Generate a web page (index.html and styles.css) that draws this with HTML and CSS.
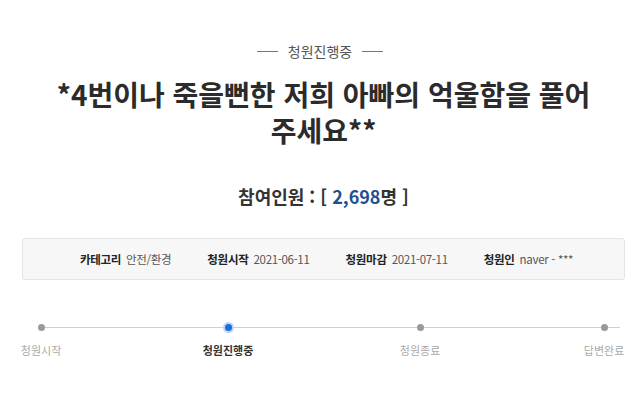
FILE: index.html
```html
<!DOCTYPE html>
<html lang="ko">
<head>
<meta charset="utf-8">
<link rel="stylesheet" href="styles.css">
</head>
<body>
<div class="page">
  <div class="status"><span class="dash"></span><span class="status-text">청원진행중</span><span class="dash"></span></div>
  <h1 class="title">*4번이나 죽을뻔한 저희 아빠의 억울함을 풀어<br>주세요**</h1>
  <div class="count">참여인원 : [ <span class="num">2,698</span>명 ]</div>
  <div class="info">
    <div class="item"><span class="k">카테고리</span><span class="v">안전/환경</span></div>
    <div class="item"><span class="k">청원시작</span><span class="v">2021-06-11</span></div>
    <div class="item"><span class="k">청원마감</span><span class="v">2021-07-11</span></div>
    <div class="item"><span class="k">청원인</span><span class="v">naver - ***</span></div>
  </div>
  <div class="progress">
    <div class="track"></div>
    <div class="step s1"><span class="dot"></span><span class="label">청원시작</span></div>
    <div class="step s2 active"><span class="dot"></span><span class="label">청원진행중</span></div>
    <div class="step s3"><span class="dot"></span><span class="label">청원종료</span></div>
    <div class="step s4"><span class="dot"></span><span class="label">답변완료</span></div>
  </div>
</div>
</body>
</html>
```
FILE: styles.css
```css
* { box-sizing: border-box; }
html, body { margin: 0; padding: 0; background: #fff; }
body { font-family: "Noto Sans CJK KR", "Noto Sans", sans-serif; color: #333; }
.page { width: 640px; padding: 0 15px 0 22px; }
.status { display: flex; align-items: center; justify-content: center; gap: 10px; padding-top: 40px; height: 62px; margin-left: -7px; }
.dash { display: block; width: 21px; height: 1px; background: #777; }
.status-text { font-size: 14px; color: #555; line-height: 22px; }
.title { margin: 14px 0 0; text-align: center; font-size: 28px; font-weight: 700; line-height: 36px; color: #2b2b2b; letter-spacing: 0; }
.count { margin-top: 36px; text-align: center; font-size: 18px; font-weight: 700; line-height: 24px; color: #333; }
.num { color: #1d4f91; }
.info { margin-top: 30px; height: 42px; background: #f7f7f7; border: 1px solid #e4e4e4; border-radius: 3px; display: flex; align-items: center; justify-content: center; gap: 36px; font-size: 11.5px; padding-left: 6px; }
.item { display: flex; gap: 5px; letter-spacing: -0.3px; }
.k { font-weight: 700; color: #222; }
.v { color: #555; }
.progress { position: relative; height: 60px; margin-top: 38px; }
.track { position: absolute; left: 18px; right: 5px; top: 9px; height: 1px; background: #cfcfcf; }
.step { position: absolute; top: 0; display: flex; flex-direction: column; align-items: center; }
.dot { width: 7px; height: 7px; border-radius: 50%; background: #999; margin-top: 6px; }
.label { margin-top: 11px; font-size: 11px; color: #aaa; line-height: 16px; white-space: nowrap; }
.s1 { left: -1px; width: 40px; }
.s2 { left: 186px; width: 40px; }
.s3 { left: 378px; width: 40px; }
.s4 { left: 562px; width: 40px; }
.active .dot { background: #1a6fd8; box-shadow: 0 0 0 2px #bcd7f5; }
.active .label { color: #333; font-weight: 700; }
```
